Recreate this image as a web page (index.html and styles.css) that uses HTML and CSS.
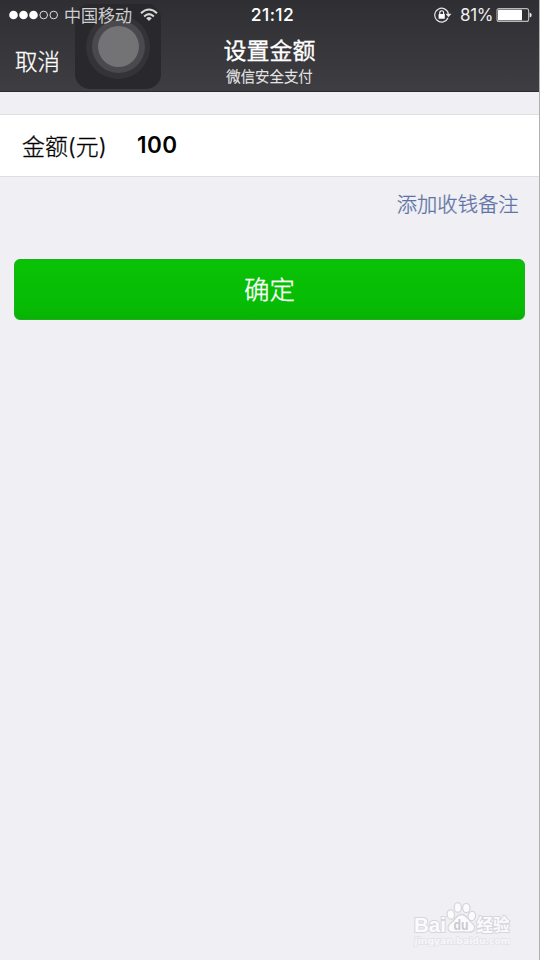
FILE: index.html
```html
<!DOCTYPE html>
<html lang="zh-CN">
<head>
<meta charset="utf-8">
<title>设置金额</title>
<link rel="stylesheet" href="styles.css">
</head>
<body>
<div class="screen">
  <header class="header">
    <div class="status">
      <div class="status-left">
        <svg class="signal" width="50" height="10" viewBox="0 0 50 10">
          <g fill="#fff"><circle cx="4.5" cy="5" r="4.3"/><circle cx="14.5" cy="5" r="4.3"/><circle cx="24.5" cy="5" r="4.3"/></g>
          <g fill="none" stroke="#ddd" stroke-width="1"><circle cx="34.7" cy="5" r="3.8"/><circle cx="44.7" cy="5" r="3.8"/></g>
        </svg>
        <span class="carrier">中国移动</span>
        <svg class="wifi" width="18" height="14" viewBox="0 0 18 14">
          <g fill="none" stroke="#d8d8d8" stroke-width="2"><path d="M1 5.2Q9-2.3 17 5.2"/><path d="M4.1 8.4Q9 3.9 13.9 8.4"/></g>
          <path d="M6.2 10.2Q9 7.7 11.8 10.2L9 13Z" fill="#d8d8d8"/>
        </svg>
      </div>
      <span class="time">21:12</span>
      <div class="status-right">
        <svg width="18" height="16" viewBox="0 0 18 16">
          <path d="M14 10.8A6.9 6.9 0 1 1 14.4 6.8" fill="none" stroke="#e6e6e6" stroke-width="1.2"/>
          <path d="M11.6 6.8H17.4L14.5 10.2Z" fill="#eee"/>
          <rect x="4.6" y="7" width="6.2" height="4.8" rx=".5" fill="#fff"/>
          <path d="M5.8 7V5.6a1.9 1.9 0 0 1 3.8 0V7" fill="none" stroke="#fff" stroke-width="1.1"/>
        </svg>
        <span class="percent">81%</span>
        <svg class="battery" width="36" height="14" viewBox="0 0 36 14">
          <rect x="1" y=".6" width="31.6" height="12.8" rx="2" fill="none" stroke="#b9b9bb" stroke-width="1.1"/>
          <rect x="2" y="1.7" width="24" height="10.6" rx=".6" fill="#fff"/>
          <path d="M33.6 4.4Q35.7 5 35.7 7T33.6 9.6Z" fill="#eee"/>
        </svg>
      </div>
    </div>
    <div class="nav">
      <span class="cancel">取消</span>
      <div class="titles">
        <h1 class="title">设置金额</h1>
        <p class="subtitle">微信安全支付</p>
      </div>
    </div>
    <div class="touch"><div class="touch-outer"><div class="touch-ring"><div class="touch-core"></div></div></div></div>
  </header>
  <main class="content">
    <div class="amount-row">
      <span class="label">金额(元)</span>
      <span class="amount">100</span>
    </div>
    <div class="remark">添加收钱备注</div>
    <div class="confirm">确定</div>
  </main>
  <footer class="watermark">
    <svg width="104" height="50" viewBox="0 0 104 50">
      <g fill="#fbfbfd" stroke="#d6d6db" stroke-width="1.3">
        <text class="wm-bai" x="4" y="31.5" textLength="32" lengthAdjust="spacingAndGlyphs">Bai</text>
        <ellipse cx="40.8" cy="14.5" rx="3.7" ry="4.8" transform="rotate(-12 40.8 14.5)"/>
        <ellipse cx="47.8" cy="7.5" rx="3.6" ry="4.9"/>
        <ellipse cx="56.3" cy="8" rx="3.7" ry="4.7"/>
        <ellipse cx="61.8" cy="16" rx="3.7" ry="4.7" transform="rotate(12 61.8 16)"/>
        <path d="M51.5 14.5C46.5 14.5 45.5 19.5 41.5 22.5C35.5 27 38 32.5 43.5 32.2C49 31.6 54 31.8 58 32.2C65.5 32.5 66.5 26.5 61.5 22.5C57 18.5 56.5 14.5 51.5 14.5Z"/>
        <text class="wm-du" x="43.5" y="29.5" textLength="15" lengthAdjust="spacingAndGlyphs">du</text>
        <text class="wm-cn" x="66.5" y="31" textLength="33" lengthAdjust="spacingAndGlyphs">经验</text>
        <text class="wm-url" x="4.5" y="44" textLength="96" lengthAdjust="spacingAndGlyphs">jingyan.baidu.com</text>
      </g>
    </svg>
  </footer>
</div>
</body>
</html>
```
FILE: styles.css
```css
* { box-sizing: border-box; margin: 0; padding: 0; }
body {
  background: #efeff4;
  font-family: Inter, "Noto Sans CJK SC", sans-serif;
}
.screen {
  width: 540px;
  height: 960px;
  display: flex;
  flex-direction: column;
  border-right: 1px solid #b0b0b3;
  background: #efeff4;
  overflow: hidden;
}
.header {
  position: relative;
  height: 92px;
  background: linear-gradient(#2f2e33, #3e3d42);
  border-bottom: 1px solid #2c2b30;
  color: #fff;
}
.status {
  height: 30px;
  display: grid;
  grid-template-columns: 1fr auto 1fr;
  align-items: center;
  padding: 0 7px 0 9px;
  position: relative;
  z-index: 1;
}
.status-left, .status-right { display: flex; align-items: center; }
.status-right { justify-content: flex-end; }
.carrier, .cancel, .subtitle, .label, .remark, .confirm { font-weight: 300; -webkit-text-stroke: .3px currentColor; }
.carrier { margin-left: 5px; font-size: 17px; line-height: 28px; padding-top: 2px; color: #d8d8d8; }
.wifi { margin-left: 8px; }
.time { font-size: 17.5px; font-weight: 500; line-height: 30px; margin-left: 4px; letter-spacing: .4px; }
.percent { font-size: 17px; margin: 0 3px 0 8px; letter-spacing: -.4px; color: #eee; }
.nav {
  display: grid;
  grid-template-columns: 120px 1fr 120px;
  height: 61px;
}
.cancel { padding: 1px 0 0 15px; font-size: 22.5px; line-height: 61px; position: relative; z-index: 1; }
.titles { text-align: center; }
.title { font-size: 23px; font-weight: 400; line-height: 34px; padding-top: 4px; -webkit-text-stroke: .3px #fff; }
.subtitle { font-size: 14.4px; line-height: 18px; color: #eee; }
.touch {
  position: absolute;
  left: 75px;
  top: 4px;
  width: 86px;
  height: 85px;
  border-radius: 15px;
  background: #29282c;
  display: grid;
  place-items: center;
}
.touch-outer { width: 64px; height: 64px; border-radius: 50%; background: #343337; display: grid; place-items: center; }
.touch-ring { width: 53px; height: 53px; border-radius: 50%; background: #4a494d; display: grid; place-items: center; }
.touch-core { width: 41px; height: 41px; border-radius: 50%; background: #737275; }
.content { flex: 1; padding-top: 22px; }
.amount-row {
  height: 63px;
  display: flex;
  align-items: center;
  padding-left: 22px;
  background: #fff;
  border-top: 1px solid #dedee1;
  border-bottom: 1px solid #dedee1;
  color: #000;
}
.label { width: 115px; font-size: 22.9px; line-height: 58px; padding-top: 3px; }
.amount { font-size: 22.5px; font-weight: 600; line-height: 60px; letter-spacing: .4px; margin-top: -2px; }
.remark { padding: 1px 20.5px 0 0; text-align: right; font-size: 20.3px; line-height: 54px; color: #5f73a5; }
.confirm {
  height: 61px;
  margin: 27px 14px 0;
  border: 1px solid #22ad20;
  border-radius: 6px;
  background: linear-gradient(#09c205, #07bb05 80%, #06b304);
  color: #fff;
  font-size: 25.5px;
  line-height: 60px;
  text-align: center;
}
.watermark { height: 60px; display: flex; justify-content: flex-end; padding-right: 25px; }
.watermark text { paint-order: stroke; font-weight: 700; }
.wm-bai { font-family: "Liberation Sans", sans-serif; font-size: 21px; stroke-width: 2; }
.watermark .wm-du { font-family: "Liberation Sans", sans-serif; font-size: 14px; fill: #c9c9cf; stroke: none; }
.wm-cn { font-size: 17px; stroke-width: 2; }
.wm-url { font-family: "DejaVu Sans", sans-serif; font-size: 9.5px; stroke: #e2e2e6; fill: #f7f7fa; }
```
